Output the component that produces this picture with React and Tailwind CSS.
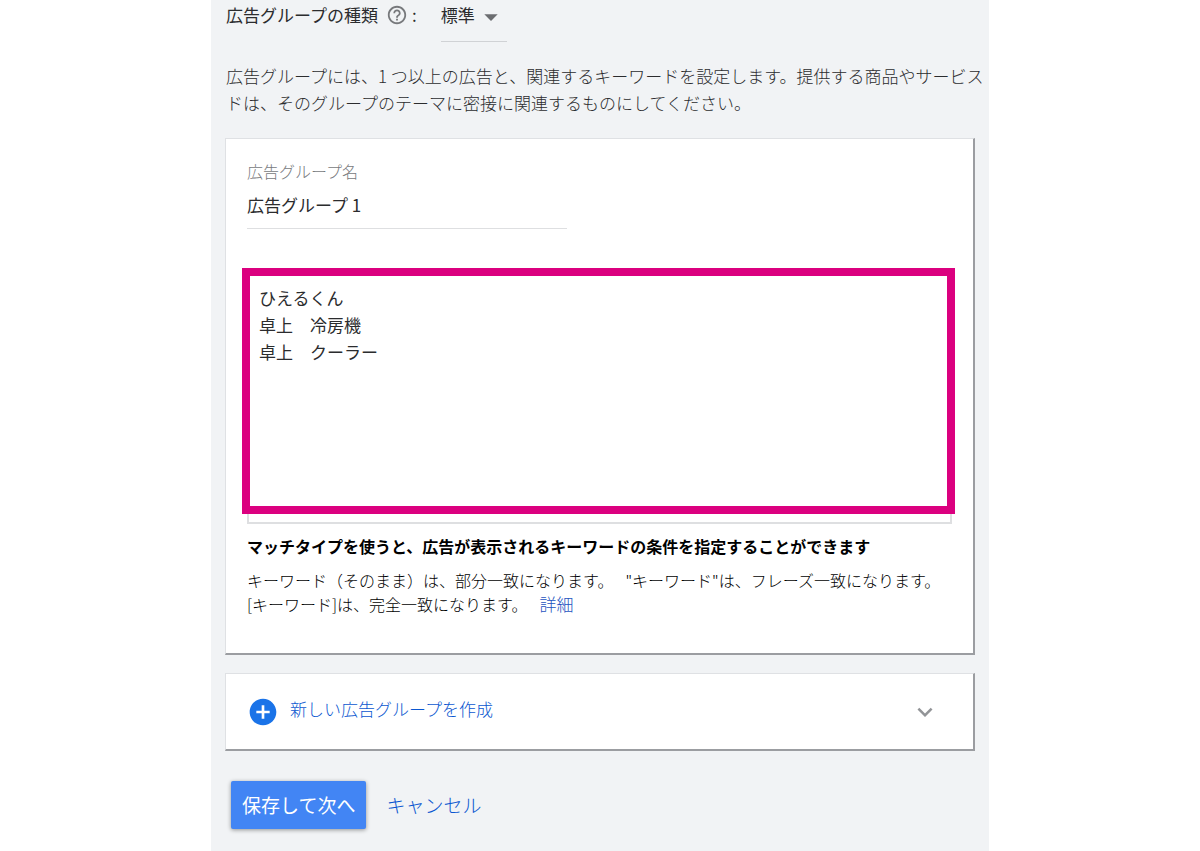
import { useState } from "react";
import { MdAddCircle, MdArrowDropDown, MdExpandMore, MdHelpOutline } from "react-icons/md";

function GroupType() {
  return (
    <div className="flex items-start px-[15px] text-[17px] leading-[30px] text-[#2b2c2e]">
      <label htmlFor="group-type">広告グループの種類</label>
      <button type="button" aria-label="ヘルプ" className="ml-2 flex h-[30px] items-center text-[#77797c]">
        <MdHelpOutline size={22} />
      </button>
      <span className="ml-1">:</span>
      <div className="relative ml-6">
        <select
          id="group-type"
          className="block h-[42px] w-[66px] appearance-none border-b border-[#d0d2d5] bg-transparent pb-[11px] leading-[30px] outline-none"
        >
          <option>標準</option>
        </select>
        <MdArrowDropDown size={32} className="pointer-events-none absolute right-0 top-px text-[#6b6d70]" />
      </div>
    </div>
  );
}

function KeywordBox() {
  const [keywords, setKeywords] = useState("ひえるくん\n卓上　冷房機\n卓上　クーラー");

  return (
    <div className="relative mt-[43px]">
      <textarea
        aria-label="キーワード"
        value={keywords}
        onChange={(e) => setKeywords(e.target.value)}
        className="block h-[252px] w-full resize-none border-2 border-[#dedfe1] px-[10px] py-[10px] text-[17px] leading-[27px] text-[#2b2c2e] outline-none"
      />
      {/* marco de resaltado */}
      <div className="pointer-events-none absolute -left-[5px] -right-[3px] -top-1 bottom-[10px] border-8 border-[#db007f]" />
    </div>
  );
}

function GroupCard() {
  const [name, setName] = useState("広告グループ 1");

  return (
    <section className="mx-[14px] mt-[22px] border-b-2 border-l border-r-2 border-t border-b-[#9b9da1] border-l-[#dfe1e4] border-r-[#9b9da1] border-t-[#dfe1e4] bg-white px-[21px] pb-[37px] pt-5">
      <label htmlFor="group-name" className="block text-base font-light text-[#77797c]">
        広告グループ名
      </label>
      <input
        id="group-name"
        type="text"
        value={name}
        onChange={(e) => setName(e.target.value)}
        className="block h-[46px] w-full max-w-[320px] border-b border-[#dedfe1] pb-[2px] text-[17px] text-[#2b2c2e] outline-none"
      />
      <KeywordBox />
      <h2 className="mt-[10px] text-base font-bold text-black">
        マッチタイプを使うと、広告が表示されるキーワードの条件を指定することができます
      </h2>
      <p className="mt-[10px] text-base font-light text-black">
        キーワード（そのまま）は、部分一致になります。
        <span className="ml-3">"キーワード"は、フレーズ一致になります。</span>
        <br />
        [キーワード]は、完全一致になります。
        <a href="#" className="ml-3 text-[17px] leading-6 text-[#2453c0]">詳細</a>
      </p>
    </section>
  );
}

export default function App() {
  return (
    <div className="min-h-screen bg-white font-['Noto_Sans_CJK_JP',sans-serif]">
      <main className="mx-auto min-h-screen w-full max-w-[778px] overflow-hidden bg-[#f1f3f5]">
        <GroupType />
        <p className="mt-5 whitespace-nowrap pl-[15px] text-[17px] font-light leading-[27px] text-[#2b2c2e]">
          広告グループには、1 つ以上の広告と、関連するキーワードを設定します。提供する商品やサービス
          <br />
          ドは、そのグループのテーマに密接に関連するものにしてください。
        </p>

        <GroupCard />

        <section className="mx-[14px] mt-[18px] border-b-2 border-l border-r-2 border-t border-b-[#9b9da1] border-l-[#dfe1e4] border-r-[#9b9da1] border-t-[#dfe1e4] bg-white">
          <button type="button" className="flex h-[75px] w-full items-center pl-[21px] pr-[33px] text-[17px] font-light text-[#0b57d0]">
            <MdAddCircle size={32} className="text-[#1a73e8]" />
            <span className="ml-[11px] pb-[6px]">新しい広告グループを作成</span>
            <MdExpandMore size={30} className="ml-auto text-[#929497]" />
          </button>
        </section>

        <div className="mt-[30px] flex items-center gap-5 px-5 text-[19px]">
          <button type="button" className="h-12 rounded-xs bg-[#4285f4] px-[11px] text-white shadow-[0_1px_4px_rgba(0,0,0,0.4)]">
            保存して次へ
          </button>
          <button type="button" className="font-light text-[#0b57d0]">キャンセル</button>
        </div>
      </main>
    </div>
  );
}
